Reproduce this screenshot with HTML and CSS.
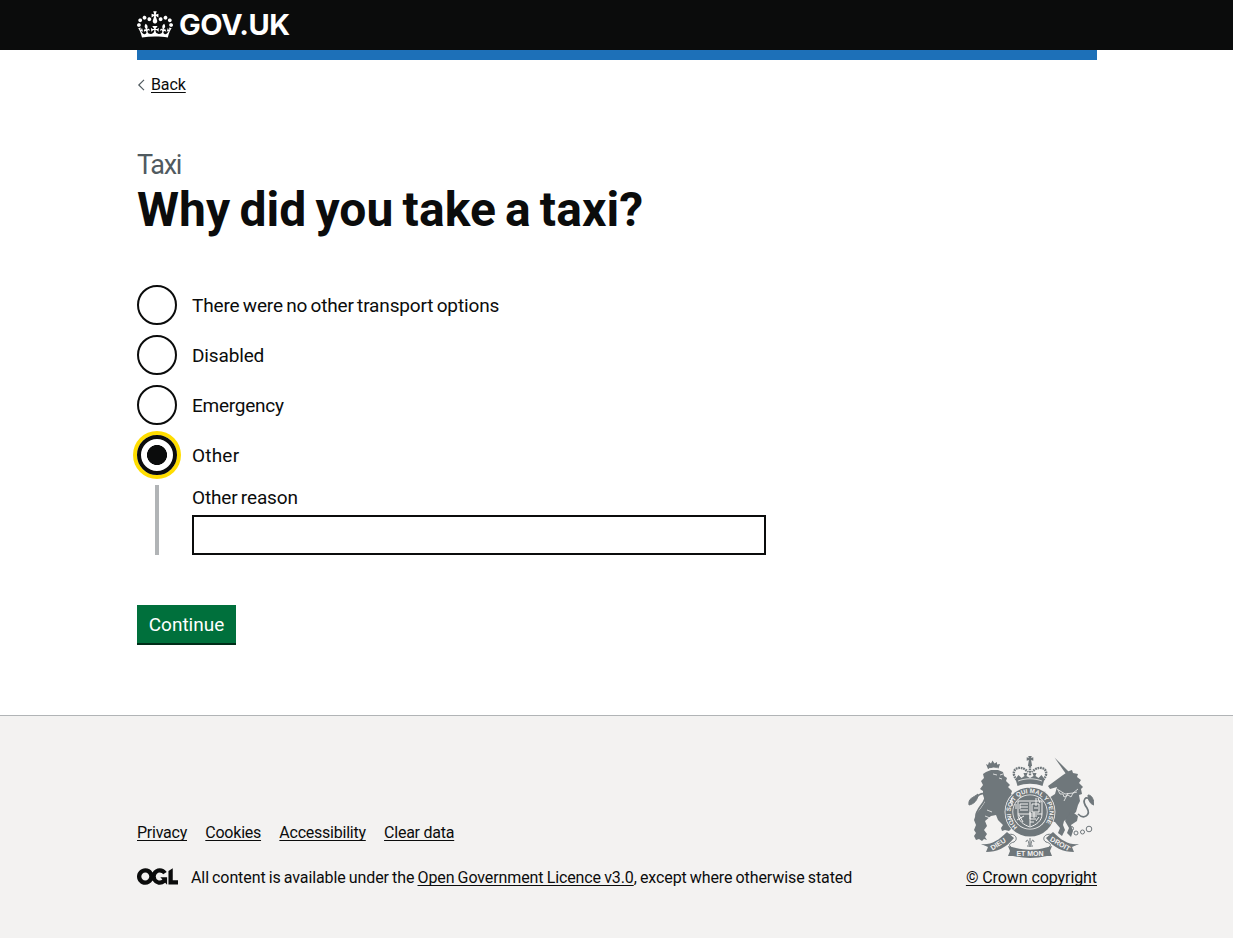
FILE: index.html
```html
<!DOCTYPE html>
<html lang="en">
<head>
<meta charset="utf-8">
<title>Why did you take a taxi?</title>
<link rel="stylesheet" href="styles.css">
</head>
<body>
<header class="header">
  <div class="container header-inner">
    <a class="logo" href="#">
      <svg class="crown" viewBox="0 0 132 97" width="36" height="27" aria-hidden="true"><path fill="currentColor" d="M25 30.2c3.5 1.5 7.7-.2 9.1-3.7 1.5-3.6-.2-7.8-3.9-9.2-3.6-1.4-7.6.3-9.1 3.9-1.4 3.5.3 7.5 3.9 9zM9 39.5c3.6 1.5 7.8-.2 9.2-3.7 1.5-3.6-.2-7.8-3.9-9.1-3.6-1.5-7.6.2-9.1 3.8-1.4 3.5.3 7.5 3.8 9zM4.4 57.2c3.5 1.5 7.7-.2 9.1-3.8 1.5-3.6-.2-7.7-3.9-9.1-3.5-1.5-7.6.3-9.1 3.8-1.4 3.5.3 7.6 3.9 9.1zm38.3-21.4c3.5 1.5 7.7-.2 9.1-3.8 1.5-3.6-.2-7.7-3.9-9.1-3.6-1.5-7.6.3-9.1 3.8-1.3 3.6.4 7.7 3.9 9.1zm64.4-5.6c-3.6 1.5-7.8-.2-9.1-3.7-1.5-3.6.2-7.8 3.8-9.2 3.6-1.4 7.7.3 9.2 3.9 1.3 3.5-.4 7.5-3.9 9zm15.9 9.3c-3.6 1.5-7.7-.2-9.1-3.7-1.5-3.6.2-7.8 3.7-9.1 3.6-1.5 7.7.2 9.2 3.8 1.5 3.5-.3 7.5-3.8 9zm4.7 17.7c-3.6 1.5-7.8-.2-9.2-3.8-1.5-3.6.2-7.7 3.9-9.1 3.6-1.5 7.7.3 9.2 3.8 1.3 3.5-.4 7.6-3.9 9.1zM89.3 35.8c-3.6 1.5-7.8-.2-9.2-3.8-1.4-3.6.2-7.7 3.9-9.1 3.6-1.5 7.7.3 9.2 3.8 1.4 3.6-.3 7.7-3.9 9.1zM69.7 17.7l8.9 4.7V9.3l-8.9 2.8c-.2-.3-.5-.6-.9-.9L72.4 0H59.6l3.5 11.2c-.3.3-.6.5-.9.9l-8.8-2.8v13.1l8.8-4.7c.3.3.6.7.9.9l-5 15.4v.1c-.2.8-.4 1.6-.4 2.4 0 4.1 3.1 7.5 7 8.1h.2c.3 0 .7.1 1 .1.4 0 .7 0 1-.1h.2c4-.6 7.1-4.1 7.1-8.1 0-.8-.1-1.7-.4-2.4V34l-5.1-15.4c.4-.2.7-.6 1-.9zM66 92.8c16.9 0 32.8 1.1 47.1 3.2 4-16.9 8.9-26.7 14-33.5l-9.6-3.4c1 4.9 1.1 7.2 0 10.2-1.5-1.4-3-4.3-4.2-8.7L108.6 76c2.8-2 5-3.2 7.5-3.3-4.4 9.4-10 11.9-13.6 11.2-4.3-.8-6.3-4.6-5.6-7.9 1-4.7 5.7-5.9 8-.5 4.3-8.7-3-11.4-7.6-8.8 7.1-7.2 7.9-13.5 2.1-21.1-8 6.1-8.1 12.3-4.5 20.8-4.7-5.4-12.1-2.5-9.5 6.2 3.4-5.2 7.9-2 7.2 3.1-.6 4.3-6.4 7.8-13.5 7.2-10.3-.9-10.9-8-11.2-13.8 2.5-.5 7.1 1.8 11 7.3L80.2 60c-4.1 4.4-8 5.3-12.3 5.4 1.4-4.4 8-11.6 8-11.6H55.5s6.4 7.2 7.9 11.6c-4.2-.1-8-1-12.3-5.4l1.4 16.4c3.9-5.5 8.5-7.7 10.9-7.3-.3 5.8-.9 12.8-11.1 13.8-7.2.6-12.9-2.9-13.5-7.2-.7-5 3.8-8.3 7.1-3.1 2.7-8.7-4.6-11.6-9.4-6.2 3.7-8.5 3.6-14.7-4.6-20.8-5.8 7.6-5 13.9 2.2 21.1-4.7-2.6-11.9.1-7.7 8.8 2.3-5.5 7.1-4.2 8.1.5.7 3.3-1.3 7.1-5.7 7.9-3.5.7-9-1.8-13.5-11.2 2.5.1 4.7 1.3 7.5 3.3l-4.7-15.4c-1.2 4.4-2.7 7.2-4.3 8.7-1.1-3-.9-5.3 0-10.2l-9.5 3.4c5 6.9 9.9 16.7 14 33.5 14.8-2.1 30.8-3.2 47.7-3.2z"/></svg>
      <span class="logo-text">GOV.UK</span>
    </a>
  </div>
</header>
<div class="container">
  <div class="blue-bar"></div>
  <a class="back" href="#"><svg class="chevron" viewBox="0 0 8 12" width="8" height="12" aria-hidden="true"><path d="M7 .8L1.800 6l5.200 5.200"/></svg><span class="back-text">Back</span></a>
  <main class="main">
    <span class="caption">Taxi</span>
    <h1 class="title">Why did you take a taxi?</h1>
    <form class="form">
      <label class="radio"><span class="dot"></span><span class="label">There were no other transport options</span></label>
      <label class="radio"><span class="dot"></span><span class="label">Disabled</span></label>
      <label class="radio"><span class="dot"></span><span class="label label-tight">Emergency</span></label>
      <label class="radio"><span class="dot dot-checked"></span><span class="label label-wide">Other</span></label>
      <div class="conditional">
        <label class="label" for="reason">Other reason</label>
        <input class="input" id="reason" type="text">
      </div>
      <button class="button" type="button">Continue</button>
    </form>
  </main>
</div>
<footer class="footer">
  <div class="container footer-inner">
    <div class="meta">
      <nav class="links">
        <a href="#">Privacy</a><a href="#">Cookies</a><a href="#">Accessibility</a><a href="#">Clear data</a>
      </nav>
      <div class="licence">
        <svg class="ogl" viewBox="0 0 483.2 195.7" width="41" height="17" aria-hidden="true"><path fill="currentColor" d="M421.5 142.8V.1l-50.7 32.3v161.1h112.4v-50.7zm-122.3-9.6A47.12 47.12 0 0 1 221 97.8c0-26 21.1-47.1 47.1-47.1 16.7 0 31.4 8.7 39.7 21.8l42.7-27.2A97.63 97.63 0 0 0 268.1 0c-36.5 0-68.3 20.1-85.1 49.7A98 98 0 0 0 97.8 0C43.9 0 0 43.9 0 97.8s43.9 97.8 97.8 97.8c36.5 0 68.3-20.1 85.1-49.7a97.76 97.76 0 0 0 149.6 25.4l19.4 22.2h3v-87.8h-80l24.3 27.5zM97.8 145c-26 0-47.1-21.1-47.1-47.1s21.1-47.1 47.1-47.1 47.1 21.1 47.1 47.1S123.8 145 97.8 145"/></svg>
        <span class="licence-text">All content is available under the <a href="#">Open Government Licence v3.0</a>, except where otherwise stated</span>
      </div>
    </div>
    <a class="copyright" href="#">
      <svg class="crest" viewBox="968 756 126 102" width="126" height="102" aria-hidden="true">
        <defs>
          <path id="garter" d="M1017.500 827A19.300 19.300 0 1 1 1042.500 827"/>
        </defs>
        <g class="ink">
          <!-- lion -->
          <path d="M988 769l-2-5 2 1 1-3 2 1.500 1.500-3 2 3 2.500-1.500v2.500l3-.5-1.500 4.500-5-1z"/>
          <path d="M986 772l5-2 7 0 5 2 1 4 3 2-1 3 4 4-2 2 4 4-1 3 3 2-3 5-1 7-3 5 0 3 2 5 3 3 3 5-4 0-2 2-4-1-3 1-1-3 2-3-5-5-2-5-5 1-6 5 2 5-3 4 3 4-2 3 2 3-3-1-2 2-3-2-3 1-2-4 2-3-2-3 2-5-2-5 2-6 5-6 4-6-1-4-1-3 0-4-3-2 3-4-2-4 3-3-1-4z"/>
          <!-- unicorn -->
          <path d="M1054.500 757.500l14.500 14.500-3 2z"/>
          <path d="M1063 775l6-4 3-1 1 3 5 1-1 3 4 3-2 3 4 4-2 2 1 5-3 1 1 6-2 4-2 7-6 5-6 4-1 4 2 5-3 6-4-3 2-5-5-6-5-1 2-6 1-7-8-7-7 0-3 2-2-4 3-4 6-4 4 1-3 4 6 2 6-4 2-7-7 2-2-3z"/>
          <path d="M1071 811l7 5-1 5-6 4 2 6-2 6-4-4 2-5-4-7z"/>
        </g>
        <g class="line">
          <path class="thick" d="M985 819c-5 4-11-1-8-7 3-7 10-11 8-17-2-4-9 1-11 6"/>
          <path class="fill" d="M969 805c-1-7 4-7 9-11 0 6-4 10-9 11z"/>
          <path class="thick" d="M1078 814c6 6 13 1 9-6-6-8-1-14 4-7"/>
          <path class="fill" d="M1088 795c4 0 6 5 6 10-4-1-6-5-6-10z"/>
          <circle cx="1071.500" cy="828.500" r="2"/><circle cx="1076" cy="833" r="2"/><circle cx="1082.500" cy="832" r="2"/><circle cx="1089" cy="829" r="2.800"/>
        </g>
        <path class="paper-line" d="M989 768.500l9-.3M993 774l4 1m3 0l3-1m-4 4l3 1m-15 31l5 2m-7 4l5 2M1057 789l8 5 8-1 5-4m-20 1l2 4 3 0 1 3 4-2 3 2 2-4 4-1m-9 1l-4 8"/>
        <!-- royal crown -->
        <path class="ink" d="M1028.200 756h3.600l-.7 2 2.200-.7v3.400l-2.200-.7 1 6h-4.200l1-6-2.200.7v-3.400l2.200.7z"/>
        <path class="beads" d="M1017 780c-9-10 3-17 11-8m15 8c9-10-3-17-11-8M1030 766v10"/>
        <path class="ink" d="M1015.500 779l3-4 3 3 3-2-1-3h4l-1 3 3.500 2 3.500-2-1-3h4l-1 3 3 2 3-3 3 4-2 7c-8-3-17-3-25 0z"/>
        <path class="paper-line" d="M1018 781c8-3 16-3 24 0"/>
        <!-- garter and shield -->
        <circle class="paper" cx="1030" cy="812" r="25.400"/>
        <circle class="ink" cx="1030" cy="812" r="24.600"/>
        <circle class="paper" cx="1030" cy="812" r="17.600"/>
        <circle class="ink" cx="1030" cy="812" r="16.800"/>
        <path class="shield-line" d="M1018 801h24v13c0 7-6 11-12 13-6-2-12-6-12-13zM1030 802v24m-12-12h24m-22-10h8m-8 3h8m-8 3h8m4-6h7v8h-7zm2 4h4m-14 8l-7 4m2-5l4 7m7-6h7m-7 3h6m-6 3h4m-22-24l-2 5m28-5l2 5m-30 14l3 4m26-4l-3 4m-20-17v5m4-5v5m10 3v7m4-7v6m-16-30c5-3 7-3 12 0m-18 10v8m24-8v8"/>
        <text class="motto garter-text"><textPath href="#garter" textLength="88">HONI SOIT QUI MAL Y PENSE</textPath></text>
        <!-- ribbon -->
        <path class="ink" d="M981 844c10 1 17-3 26-12l7 6c-8 10-17 14-28 14l2-5zM1079 844c-10 1-17-3-26-12l-7 6c8 10 17 14 28 14l-2-5z"/>
        <path class="ink" d="M1008 846l6 1.500c10 3 22 3 32 0l6-1.500-2 5 2 5-5 0c-11 2.500-23 2.500-34 0l-5 0 2-5z"/>
        <path class="line" d="M1007 835c8-3 12 4 7 7-4 1-6 3-3 5M1053 835c-8-3-12 4-7 7 4 1 6 3 3 5"/>
        <path class="paper" d="M1025 838h10l-2 8h-6z"/>
        <path class="line" d="M1030 838v9m-4-5c1-4 3-1 3 3m5-3c-1-4-3-1-3 3m-4 1h6"/>
        <text class="motto" x="992.500" y="850.500" transform="rotate(-33 992.500 850.500)">DIEU</text>
        <text class="motto" x="1030" y="856" text-anchor="middle">ET MON</text>
        <text class="motto" x="1049.500" y="840.500" transform="rotate(30 1049.500 840.500)">DROIT</text>
      </svg>
      <span class="copy-text">© Crown copyright</span>
    </a>
  </div>
</footer>
</body>
</html>
```
FILE: styles.css
```css
* { box-sizing: border-box; }
body {
  margin: 0;
  background: #fff;
  color: #0b0c0c;
  font-family: Roboto, sans-serif;
  font-size: 16px;
  line-height: 20px;
}
a { color: inherit; text-decoration-thickness: 1px; text-underline-offset: 2px; text-decoration-skip-ink: none; }
.container { width: 960px; margin: 0 auto 0 137px; }
.header { height: 50px; background: #0b0c0c; color: #fff; }
.header-inner { padding-top: 11px; }
.logo { display: flex; gap: 6px; height: 27px; text-decoration: none; }
.logo-text { font: 700 29px/27px Inter, sans-serif; letter-spacing: -.5px; white-space: nowrap; }
.blue-bar { height: 10px; background: #1d70b8; }
.back { display: flex; align-items: center; width: max-content; height: 20px; margin-top: 15px; gap: 6px; text-decoration: none; }
.chevron { fill: none; stroke: #505a5f; stroke-width: 1.200; }
.back-text { letter-spacing: -.1px; text-decoration: underline; text-decoration-thickness: 1px; text-underline-offset: 2px; }
.main { padding-top: 55px; }
.caption { display: block; color: #505a5f; font-size: 27px; line-height: 30px; letter-spacing: -1.300px; }
.title { margin: 5px 0 50px; font: 700 48px/50px Roboto, sans-serif; word-spacing: -3px; letter-spacing: .1px; white-space: nowrap; }
.form { display: flex; flex-direction: column; align-items: flex-start; font-size: 19px; line-height: 25px; }
.radio { display: flex; align-items: center; gap: 15px; height: 40px; margin-bottom: 10px; white-space: nowrap; }
.label { letter-spacing: -.140px; word-spacing: -1.300px; }
.label-tight { letter-spacing: -.250px; }
.label-wide { letter-spacing: .2px; }
.dot { width: 40px; height: 40px; border: 2px solid #0b0c0c; border-radius: 50%; }
.dot-checked { border-width: 4px; box-shadow: 0 0 0 4px #fd0; background: radial-gradient(circle, #0b0c0c 9.700px, #fff 10.300px); }
.conditional { display: flex; flex-direction: column; gap: 5px; height: 70px; margin: 0 0 50px 18px; padding-left: 33px; border-left: 4px solid #b1b4b6; }
.input { width: 574px; height: 40px; border: 2px solid #0b0c0c; border-radius: 0; background: #fff; }
.button { height: 40px; width: 99px; padding: 0 0 2px; border: 0; box-shadow: inset 0 -2px 0 #002d18; background: #00703c; color: #fff; font: 19px/19px Roboto, sans-serif; }
.footer { height: 223px; margin-top: 70px; border-top: 1px solid #b1b4b6; background: #f3f2f1; }
.footer-inner { display: flex; justify-content: space-between; align-items: flex-end; padding-top: 40px; white-space: nowrap; }
.links { display: flex; gap: 18.300px; margin-bottom: 25px; letter-spacing: -.240px; }
.licence { display: flex; align-items: center; gap: 13px; height: 20px; }
.licence-text { letter-spacing: -.1px; word-spacing: -.7px; }
.ogl { margin-bottom: 3px; }
.copyright { display: flex; flex-direction: column; align-items: center; gap: 10px; }
.copy-text { letter-spacing: -.080px; }
.crest { display: block; }
.ink, .fill { fill: #6f777b; }
.line { fill: none; stroke: #6f777b; stroke-width: 1; }
.thick { stroke-width: 1.700; }
.paper { fill: #f3f2f1; }
.paper-line { fill: none; stroke: #f3f2f1; stroke-width: .8; }
.shield-line { fill: none; stroke: #f3f2f1; stroke-width: 1; }
.beads { fill: none; stroke: #6f777b; stroke-width: 2.400; stroke-dasharray: 1.800 .7; }
.motto { fill: #f3f2f1; font: 700 7px "Liberation Sans", sans-serif; }
.garter-text { font-size: 6.200px; }
```
